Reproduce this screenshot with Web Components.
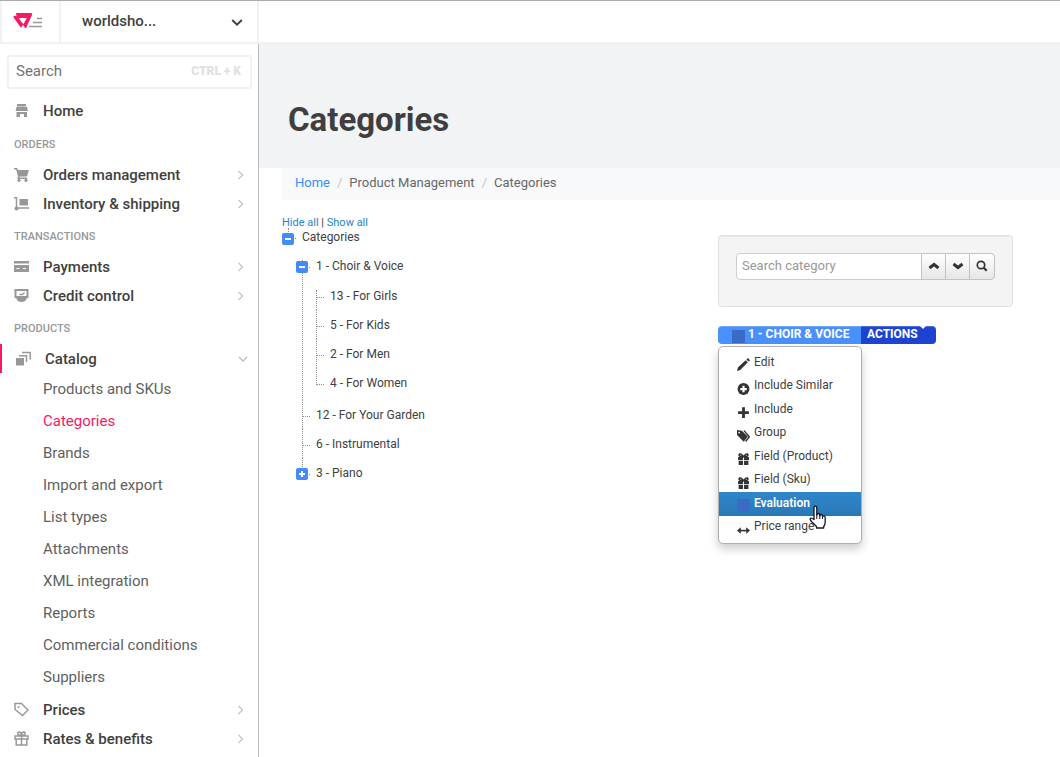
<!DOCTYPE html>
<html lang="en">
<head>
<meta charset="utf-8">
<title>Categories</title>
<style>
  html, body { margin: 0; min-height: 100%; }
  body { font: 15px/20px Roboto, "Liberation Sans", sans-serif; color: #3f3f40; background: #fff; }
</style>
</head>
<body>
<app-shell>
  <app-header slot="header"></app-header>
  <side-nav slot="nav">
    <nav-item icon="home" slot="top" plain>Home</nav-item>
    <nav-section heading="ORDERS">
      <nav-item icon="cart">Orders management</nav-item>
      <nav-item icon="dolly">Inventory &amp; shipping</nav-item>
    </nav-section>
    <nav-section heading="TRANSACTIONS">
      <nav-item icon="card">Payments</nav-item>
      <nav-item icon="credit">Credit control</nav-item>
    </nav-section>
    <nav-section heading="PRODUCTS">
      <nav-item icon="catalog" open>Catalog
        <sub-link slot="sub">Products and SKUs</sub-link>
        <sub-link slot="sub" current>Categories</sub-link>
        <sub-link slot="sub">Brands</sub-link>
        <sub-link slot="sub">Import and export</sub-link>
        <sub-link slot="sub">List types</sub-link>
        <sub-link slot="sub">Attachments</sub-link>
        <sub-link slot="sub">XML integration</sub-link>
        <sub-link slot="sub">Reports</sub-link>
        <sub-link slot="sub">Commercial conditions</sub-link>
        <sub-link slot="sub">Suppliers</sub-link>
      </nav-item>
      <nav-item icon="tag">Prices</nav-item>
      <nav-item icon="gift">Rates &amp; benefits</nav-item>
    </nav-section>
  </side-nav>
  <page-title>Categories</page-title>
  <crumb-trail></crumb-trail>
  <category-page>
    <category-tree slot="tree">
      <tree-node label="Categories" state="open" root>
        <tree-node label="1 - Choir &amp; Voice" state="open">
          <tree-node label="13 - For Girls"></tree-node>
          <tree-node label="5 - For Kids"></tree-node>
          <tree-node label="2 - For Men"></tree-node>
          <tree-node label="4 - For Women"></tree-node>
        </tree-node>
        <tree-node label="12 - For Your Garden"></tree-node>
        <tree-node label="6 - Instrumental"></tree-node>
        <tree-node label="3 - Piano" state="closed"></tree-node>
      </tree-node>
    </category-tree>
    <category-search></category-search>
    <action-bar label="1 - CHOIR &amp; VOICE">
      <menu-item icon="pencil">Edit</menu-item>
      <menu-item icon="pluscircle">Include Similar</menu-item>
      <menu-item icon="plus">Include</menu-item>
      <menu-item icon="tags">Group</menu-item>
      <menu-item icon="giftsolid">Field (Product)</menu-item>
      <menu-item icon="giftsolid">Field (Sku)</menu-item>
      <menu-item icon="block" active>Evaluation</menu-item>
      <menu-item icon="arrows">Price range</menu-item>
    </action-bar>
  </category-page>
</app-shell>

<script>
const icons = {
  logo: ['0 0 32 18', '<path fill="#f71963" fill-rule="evenodd" d="M3 1h15q1.800 0 1.200 1.500L13.500 15q-1 2-2.200 0L9.900 12.600 9 14.500q-1 1.500-2 0L.6 5.500Q0 4.300 1.400 3.500L3.500 4.300ZM6.500 6h6.500q.8 0 .4.800l-2.600 4.600q-.5.700-1 0L6.300 7Q6 6 6.500 6Z"/><path stroke="#979899" stroke-width="1.300" d="M24 6.500h5M20 10.500h9M16 14.500h13"/>'],
  home: ['0 0 15 15', '<path fill="currentColor" d="M3 1h9v2.500H3zM2.500 4h10.500l1 4H1.500zM2.500 9H13v5h-3v-3H6v3H2.500z"/>'],
  cart: ['0 0 15 15', '<path fill="currentColor" d="M0 1h3.200L4 3h11l-2 6.500H5.500L5.200 10.500H13V12H3.300L4 9.500 2.200 2.500H0z"/><circle cx="5" cy="13.300" r="1.600" fill="currentColor"/><circle cx="12" cy="13.300" r="1.600" fill="currentColor"/>'],
  dolly: ['0 0 15 15', '<path fill="none" stroke="currentColor" stroke-width="1.500" d="M0 1.800h2.500V12H15"/><circle cx="2.500" cy="12.500" r="2" fill="currentColor"/><path fill="currentColor" d="M5.500 3H14v6.500H5.500z"/>'],
  card: ['0 0 15 15', '<path fill="currentColor" d="M0 2h15v2.500H0zM0 6h15v7H0z"/><path stroke="#fff" d="M2.500 9.500h3M9 9.500h3"/>'],
  credit: ['0 0 15 15', '<path fill="none" stroke="currentColor" stroke-width="2" d="M1.500 2h12v7h-12z"/><path fill="currentColor" d="M2 9.500h11q-1 4.500-5.500 4.500T2 9.500z"/><path fill="none" stroke="currentColor" stroke-width="1.300" d="M5.500 6.500h3l2-2"/>'],
  catalog: ['0 0 15 15', '<path fill="currentColor" d="M0 7h8v7.500H0z"/><path fill="none" stroke="currentColor" stroke-width="1.500" d="M3 4.700h7.500V11M6 1.500h8.200v7"/>'],
  tag: ['0 0 15 15', '<path fill="none" stroke="currentColor" stroke-width="1.500" d="M1 1.500h6.500L14 8l-5.500 5.500L1 7.500z"/><circle cx="4.500" cy="5" r="1" fill="currentColor"/>'],
  gift: ['0 0 15 15', '<path fill="none" stroke="currentColor" stroke-width="1.500" d="M1 5h13v3H1zM2.200 8v6h10.600V8M7.500 5v9M7.500 4.500C3 4.500 3 1 5 1s2.500 2 2.500 3.500C7.500 3 8 1 10 1s2 3.500-2.500 3.500"/>'],
  right: ['0 0 10 10', '<path fill="none" stroke="#c4c4c6" stroke-width="1.300" d="M2.500 1l4 4-4 4"/>'],
  down: ['0 0 10 10', '<path fill="none" stroke="#bcbdbf" stroke-width="1.300" d="M1 3l4 4 4-4"/>'],
  chevron: ['0 0 10 10', '<path fill="none" stroke="#3f3f40" stroke-width="1.600" d="M1 3.300L5 7.200 9 3.300"/>'],
  up2: ['0 0 12 12', '<path fill="none" stroke="#333" stroke-width="3" d="M1.500 8L6 4.500 10.500 8"/>'],
  down2: ['0 0 12 12', '<path fill="none" stroke="#333" stroke-width="3" d="M1.500 4L6 7.500 10.500 4"/>'],
  search: ['0 0 12 12', '<circle cx="5" cy="5" r="3.700" fill="none" stroke="#333" stroke-width="1.700"/><path stroke="#333" stroke-width="2.200" d="M7.700 7.700l3 3"/>'],
  pencil: ['0 0 12 12', '<path fill="#333" d="M0 12l1-3.500L8 2l2 2-7 7zM8.700 1.300 10 0l2 2-1.300 1.300z"/>'],
  pluscircle: ['0 0 12 12', '<circle cx="6" cy="6.500" r="5.500" fill="#333"/><path stroke="#fff" stroke-width="2" d="M6 3.500v6M3 6.500h6"/>'],
  plus: ['0 0 12 12', '<path stroke="#333" stroke-width="2.600" d="M6 2v10M1 7h10"/>'],
  tags: ['0 0 12 12', '<path fill="#333" d="M0 1l4.500.5L10 7l-3.800 4.800L0 5.500z"/><path fill="none" stroke="#333" stroke-width="1.300" d="M6.500 1.500L11.400 7.200 8 11.500"/><circle cx="2" cy="3.300" r=".8" fill="#fff"/>'],
  giftsolid: ['0 0 12 12', '<path fill="#333" d="M1 4.500h4.500v3H1zM6.500 4.500H11v3H6.500zM1.500 8.300h4V12h-4zM6.500 8.300h4V12h-4z"/><path fill="none" stroke="#333" stroke-width="1.500" d="M6 4.300Q1.500 4.500 2 2.500T6 4.300Q9.500 .5 10 2.500T6 4.300"/>'],
  block: ['0 0 12 12', '<path fill="#3a6cc6" d="M0 0h12v12H0z"/>'],
  arrows: ['0 0 12 12', '<path stroke="#333" stroke-width="1.500" d="M2 7h8"/><path fill="#333" d="M0 7l3.500-3v6zM12 7L8.500 4v6z"/>'],
  hand: ['0 0 18 26', '<path fill="#fff" stroke="#151525" stroke-width="1.300" stroke-linejoin="round" d="M5 14.500V3q0-1.800 1.300-1.800T7.800 3v7q0-1.500 1.500-1.500t1.500 1.500v1q0-1.500 1.300-1.500t1.400 1.500v1q.2-1.200 1.400-1.200T16.200 12.500v4.500q0 2.500-1.500 4.500v1.500H7.500v-1.500L2.500 16.500Q.5 14 1.500 13.300t3.500 1.200z"/><path fill="none" stroke="#151525" d="M7.800 9v5M10.800 10v4M13.500 11v3"/>']
};

function define(name, html) {
  const template = document.createElement('template');
  customElements.define(name, class extends HTMLElement {
    constructor() {
      super();
      this.attachShadow({ mode: 'open' });
    }
    connectedCallback() {
      if (this.shadowRoot.childNodes.length) return;
      template.innerHTML = typeof html === 'function' ? html(this) : html;
      this.shadowRoot.append(template.content.cloneNode(true));
    }
  });
}
const esc = s => s.replace(/&/g, '&amp;');

define('ui-icon', el => {
  const [box, body] = icons[el.getAttribute('name')];
  return `<style>:host{display:block;flex:none}svg{display:block;width:100%;height:100%}</style>
  <svg viewBox="${box}" aria-hidden="true">${body}</svg>`;
});

define('app-shell', `<style>
  :host{display:flex;flex-direction:column;min-height:100vh}
  .body{display:flex;flex:1}
  main{flex:1;min-width:0}
  </style>
  <slot name="header"></slot>
  <div class="body"><slot name="nav"></slot><main><slot></slot></main></div>`);

define('app-header', `<style>
  :host{display:block;border-top:1px solid #aaabad;border-bottom:2px solid #f2f2f3;background:#fff}
  header{display:flex;height:41px;border-left:2px solid #f2f2f3}
  .logo{display:flex;align-items:center;width:59px;padding:0 0 2px 11px;box-sizing:border-box;border-right:2px solid #f2f2f3}
  .logo ui-icon{width:32px;height:18px}
  .store{display:flex;align-items:center;width:198px;box-sizing:border-box;border-right:2px solid #f2f2f3;padding:0 14px 0 21px}
  select{flex:1;min-width:0;appearance:none;border:0;background:none;padding:0 0 2px;margin:0;font:500 15px/20px Roboto,"Liberation Sans",sans-serif;color:#3f3f40}
  .store ui-icon{width:12px;height:12px}
  </style>
  <header>
    <a class="logo" href="#" aria-label="Admin home"><ui-icon name="logo"></ui-icon></a>
    <div class="store"><select aria-label="Store"><option>worldsho...</option></select><ui-icon name="chevron"></ui-icon></div>
  </header>`);

define('side-nav', `<style>
  :host{display:block;width:258px;flex:none;border-right:1px solid #b9bbc0;background:#fff}
  .search{display:flex;align-items:center;height:34px;box-sizing:border-box;margin:11px 6px 7px 7px;padding:0 9px 2px 7px;border:2px solid #f2f2f3;border-radius:3px}
  input{flex:1;min-width:0;border:0;padding:0;outline:0;background:none;font:15px/20px Roboto,"Liberation Sans",sans-serif;color:#3f3f40}
  input::placeholder{color:#727273}
  kbd{font:900 12px/16px Roboto,"Liberation Sans",sans-serif;color:#dfe0e1}
  .top{padding-bottom:1px}
  </style>
  <div class="search"><input type="text" placeholder="Search" aria-label="Search"><kbd>CTRL + K</kbd></div>
  <nav><div class="top"><slot name="top"></slot></div><slot></slot></nav>`);

define('nav-section', el => `<style>
  :host{display:block}
  h2{margin:0;padding:4px 0 0 14px;font-size:11px;line-height:30px;font-weight:500;color:#979899}
  </style><h2>${el.getAttribute('heading')}</h2><slot></slot>`);

define('nav-item', el => `<style>
  :host{display:block}
  a{display:flex;align-items:center;height:29px;padding:0 12px 0 14px;gap:14px;font-weight:500;color:#3f3f40;text-decoration:none}
  :host([open]) a{border-left:2px solid #f71963;padding:0 10px 0 14px}
  .icon{width:15px;height:15px;color:#979899}
  .arrow{width:10px;height:10px}
  span{flex:1}
  :host([open]) .sub{padding-bottom:2px}
  </style>
  <a href="#"><ui-icon class="icon" name="${el.getAttribute('icon')}"></ui-icon><span><slot></slot></span>
  ${el.hasAttribute('plain') ? '' : `<ui-icon class="arrow" name="${el.hasAttribute('open') ? 'down' : 'right'}"></ui-icon>`}</a>
  <div class="sub"><slot name="sub"></slot></div>`);

define('sub-link', `<style>
  :host{display:block}
  a{display:block;padding-left:43px;line-height:32px;color:#5e5f61;text-decoration:none}
  :host([current]) a{color:#f71963}
  </style><a href="#"><slot></slot></a>`);

define('page-title', `<style>
  :host{display:block;background:#f2f3f5}
  h1{margin:0;padding:56px 29px 28px;font-size:33px;line-height:40px;font-weight:700;color:#3f3f40}
  </style><h1><slot></slot></h1>`);

define('crumb-trail', `<style>
  :host{display:block;margin-left:23px;background:#f8f9fb}
  ol{display:flex;list-style:none;margin:0;padding:5px 13px 7px;font-size:13px;line-height:20px;color:#666769}
  li+li::before{content:"/";padding:0 7px;color:#c2c4c8}
  a{color:#368df7;text-decoration:none}
  </style>
  <nav aria-label="Breadcrumb"><ol><li><a href="#">Home</a></li><li>Product Management</li><li>Categories</li></ol></nav>`);

define('category-page', `<style>
  :host{display:grid;grid-template-columns:minmax(0,1fr) 295px;padding:16px 47px 0 23px}
  .side{padding-top:19px}
  </style><slot name="tree"></slot><div class="side"><slot></slot></div>`);

define('category-tree', `<style>
  :host{display:block}
  p{margin:0;font-size:11px;line-height:14px;color:#333}
  a{color:#2484c6;text-decoration:none}
  </style><p><a href="#">Hide all</a> | <a href="#">Show all</a></p><slot></slot>`);

define('tree-node', el => {
  const state = el.getAttribute('state');
  const label = esc(el.getAttribute('label'));
  return `<style>
  :host{display:block;position:relative}
  .row{display:flex;align-items:center;height:29px;font-size:12px;color:#404042}
  .mark{width:20px;flex:none}
  button{display:flex;align-items:center;justify-content:center;position:relative;z-index:1;width:12px;height:12px;margin-top:3px;padding:0;border:0;border-radius:2px;background:#428bfb}
  svg{width:6px;height:6px}
  .kids{padding:1px 0 3px 14px}
  :host::before{content:"";position:absolute;left:6px;top:0;bottom:0;border-left:1px dotted #8f8f8f}
  :host::after{content:"";position:absolute;left:7px;top:16px;width:7px;border-top:1px dotted #8f8f8f}
  :host(:first-of-type)::before{top:9px}
  :host(:last-of-type)::before{bottom:auto;height:17px}
  :host([root])::before{top:-2px;height:4px}
  :host([root])::after{top:8px}
  :host([root]) .row{height:14px}
  :host([root]) .kids{padding-top:7px}
  </style>
  <div class="row"><div class="mark">${state ? `<button type="button" aria-label="Toggle ${label}"><svg viewBox="0 0 6 6" aria-hidden="true"><path stroke="#fff" stroke-width="2" d="M0 3h6${state === 'closed' ? 'M3 0v6' : ''}"/></svg></button>` : ''}</div><span>${label}</span></div>
  ${state === 'open' ? '<div class="kids"><slot></slot></div>' : ''}`;
});

define('category-search', `<style>
  :host{display:block;padding:17px 17px 26px;border:1px solid #e1e1e1;border-radius:4px;background:#f4f4f4;box-shadow:inset 0 1px 1px #0000000d}
  form{display:flex;height:27px}
  input{flex:1;min-width:0;box-sizing:border-box;margin:0;padding:0 5px 2px;border:1px solid #ccc;border-radius:4px 0 0 4px;background:#fff;outline:0;font:13px/20px Roboto,"Liberation Sans",sans-serif;color:#444}
  input::placeholder{color:#999}
  button{display:flex;align-items:center;justify-content:center;width:25px;box-sizing:border-box;margin:0 0 0 -1px;padding:0 0 2px;border:1px solid #c3c3c3;background:linear-gradient(#fff,#e6e6e6)}
  button:last-child{width:26px;border-radius:0 4px 4px 0}
  ui-icon{width:12px;height:12px}
  </style>
  <form><input type="text" placeholder="Search category" aria-label="Search category">
  <button type="button" aria-label="Previous"><ui-icon name="up2"></ui-icon></button>
  <button type="button" aria-label="Next"><ui-icon name="down2"></ui-icon></button>
  <button type="button" aria-label="Find"><ui-icon name="search"></ui-icon></button></form>`);

define('action-bar', el => `<style>
  :host{display:block;position:relative;margin-top:19px}
  .group{display:flex;height:18px}
  button{display:flex;margin:0;padding:0 6px;border:0;font:700 12px/16px Roboto,"Liberation Sans",sans-serif;color:#fff;box-shadow:inset 0 1px 0 #ffffff33}
  .name{gap:3px;width:143px;padding-left:14px;background:#4a90fc;border-radius:4px 0 0 4px;white-space:nowrap}
  .name ui-icon{width:13px;height:13px;margin-top:4px}
  .actions{width:75px;gap:2px;background:#1d43d0;border-radius:0 4px 4px 0}
  .actions::after{content:"";border:3px solid transparent;border-top-color:#fff;border-bottom:0;height:0}
  menu{position:absolute;top:20px;left:0;display:grid;grid-auto-rows:1fr;width:144px;height:198px;box-sizing:border-box;margin:0;padding:4px 0;list-style:none;border:1px solid #aeaeae;border-radius:5px;background:#fff;box-shadow:0 5px 10px #00000033}
  .pointer{position:absolute;left:91px;top:179px;width:18px;height:26px}
  </style>
  <div class="group"><button type="button" class="name"><ui-icon name="block"></ui-icon>${esc(el.getAttribute('label'))}</button><button type="button" class="actions" aria-haspopup="menu">ACTIONS</button></div>
  <menu><slot></slot></menu>
  <ui-icon class="pointer" name="hand"></ui-icon>`);

define('menu-item', el => `<style>
  :host{display:grid}
  a{display:flex;align-items:center;gap:4px;padding:0 18px;font-size:12px;line-height:20px;color:#404042;text-decoration:none}
  ui-icon{width:13px;height:13px;margin-top:4px}
  :host([active]) a{background:linear-gradient(#2f86cb,#2878b6);color:#fff;font-weight:600}
  span{padding-bottom:2px}
  </style><a href="#"><ui-icon name="${el.getAttribute('icon')}"></ui-icon><span><slot></slot></span></a>`);
</script>
</body>
</html>
